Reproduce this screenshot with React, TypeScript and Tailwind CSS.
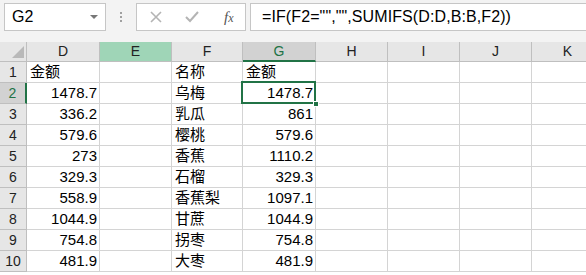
import React from "react";

const cols = ["D", "E", "F", "G", "H", "I", "J", "K"];

const dVals = ["金额", "1478.7", "336.2", "579.6", "273", "329.3", "558.9", "1044.9", "754.8", "481.9"];
const fVals = ["名称", "乌梅", "乳瓜", "樱桃", "香蕉", "石榴", "香蕉梨", "甘蔗", "拐枣", "大枣"];
const gVals = ["金额", "1478.7", "861", "579.6", "1110.2", "329.3", "1097.1", "1044.9", "754.8", "481.9"];

const font = { fontFamily: '"Liberation Sans", "Noto Sans CJK SC", sans-serif' };

const Cell: React.FC<{ text?: string; col: string; row: number }> = ({ text = "", col, row }) => {
  const isText = row === 1 || col === "F";
  const selected = col === "G" && row === 2;
  return (
    <div className="relative h-[21px] border-r border-b border-[#d4d4d4] bg-white overflow-visible">
      {text && (
        <div
          className={
            "h-full flex items-center text-[15px] text-black whitespace-nowrap " +
            (isText ? "justify-start pl-[3px]" : "justify-end pr-[2px]")
          }
        >
          {text}
        </div>
      )}
      {selected && (
        <>
          <div className="absolute left-[-2px] top-[-2px] right-[-1px] bottom-[-1px] border-2 border-[#217346] z-10" />
          <div className="absolute right-[-4px] bottom-[-4px] w-[6px] h-[6px] bg-[#217346] border border-white z-20" />
        </>
      )}
    </div>
  );
};

const App: React.FC = () => {
  const rows = Array.from({ length: 10 }, (_, i) => i + 1);
  return (
    <div className="w-[586px] h-[275px] overflow-hidden bg-white" style={font}>
      {/* formula bar */}
      <div className="h-[42px] bg-[#f3f3f3] flex items-start pt-[3px] pl-[4px]">
        <div className="w-[102px] h-[28px] bg-white border border-[#c6c6c6] flex items-center justify-between pl-[7px] pr-[7px]">
          <span className="text-[16px] text-black">G2</span>
          <span className="w-0 h-0 border-l-[4px] border-r-[4px] border-t-[4px] border-l-transparent border-r-transparent border-t-[#777]" />
        </div>
        <div className="w-[30px] h-[28px] flex flex-col items-center justify-center gap-[2px]">
          <span className="w-[2px] h-[2px] bg-[#a0a0a0]" />
          <span className="w-[2px] h-[2px] bg-[#a0a0a0]" />
          <span className="w-[2px] h-[2px] bg-[#a0a0a0]" />
        </div>
        <div className="w-[110px] h-[28px] bg-white border border-[#c6c6c6] flex items-center">
          <svg width="12" height="12" viewBox="0 0 12 12" className="ml-[13px]">
            <path d="M1 1 L11 11 M11 1 L1 11" stroke="#b4b4b4" strokeWidth="1.6" />
          </svg>
          <svg width="14" height="12" viewBox="0 0 14 12" className="ml-[23px]">
            <path d="M1 6 L5 10 L13 1" stroke="#b4b4b4" strokeWidth="2" fill="none" />
          </svg>
          <span
            className="ml-[25px] text-[15px] italic text-[#555]"
            style={{ fontFamily: '"Liberation Serif", serif' }}
          >
            f<span className="text-[12px]">x</span>
          </span>
        </div>
        <div className="ml-[4px] flex-1 h-[28px] bg-white border border-[#c6c6c6] border-r-0 flex items-center pl-[11px]">
          <span className="text-[16px] text-black whitespace-nowrap tracking-[0.1px]">=IF(F2="","",SUMIFS(D:D,B:B,F2))</span>
        </div>
      </div>

      {/* sheet */}
      <div className="grid grid-cols-[27px_73px_72px_71px_73px_72px_72px_72px_72px]">
        {/* header row */}
        <div className="h-[20px] bg-[#e6e6e6] border-r border-b border-[#bfbfbf] flex items-end justify-end pr-[2px] pb-[3px]">
          <svg width="12" height="12" viewBox="0 0 12 12">
            <polygon points="12,0 12,12 0,12" fill="#b9b9b9" />
          </svg>
        </div>
        {cols.map((c) => {
          const isE = c === "E";
          const isG = c === "G";
          return (
            <div
              key={c}
              className={
                "h-[20px] flex items-center justify-center text-[14px] border-r border-[#bfbfbf] " +
                (isE
                  ? "bg-[#9fd5b7] text-[#222] border-b"
                  : isG
                  ? "bg-[#d2d2d2] text-[#217346] border-b-2 border-b-[#217346]"
                  : "bg-[#e6e6e6] text-[#222] border-b")
              }
            >
              {c}
            </div>
          );
        })}

        {rows.map((r) => (
          <React.Fragment key={r}>
            <div
              className={
                "h-[21px] flex items-center justify-center text-[14px] border-b border-[#bfbfbf] " +
                (r === 2
                  ? "bg-[#d2d2d2] text-[#217346] border-r-2 border-r-[#217346]"
                  : "bg-[#e6e6e6] text-[#222] border-r")
              }
            >
              {r}
            </div>
            {cols.map((c) => (
              <Cell
                key={c}
                col={c}
                row={r}
                text={c === "D" ? dVals[r - 1] : c === "F" ? fVals[r - 1] : c === "G" ? gVals[r - 1] : ""}
              />
            ))}
          </React.Fragment>
        ))}
      </div>
    </div>
  );
};

export default App;
